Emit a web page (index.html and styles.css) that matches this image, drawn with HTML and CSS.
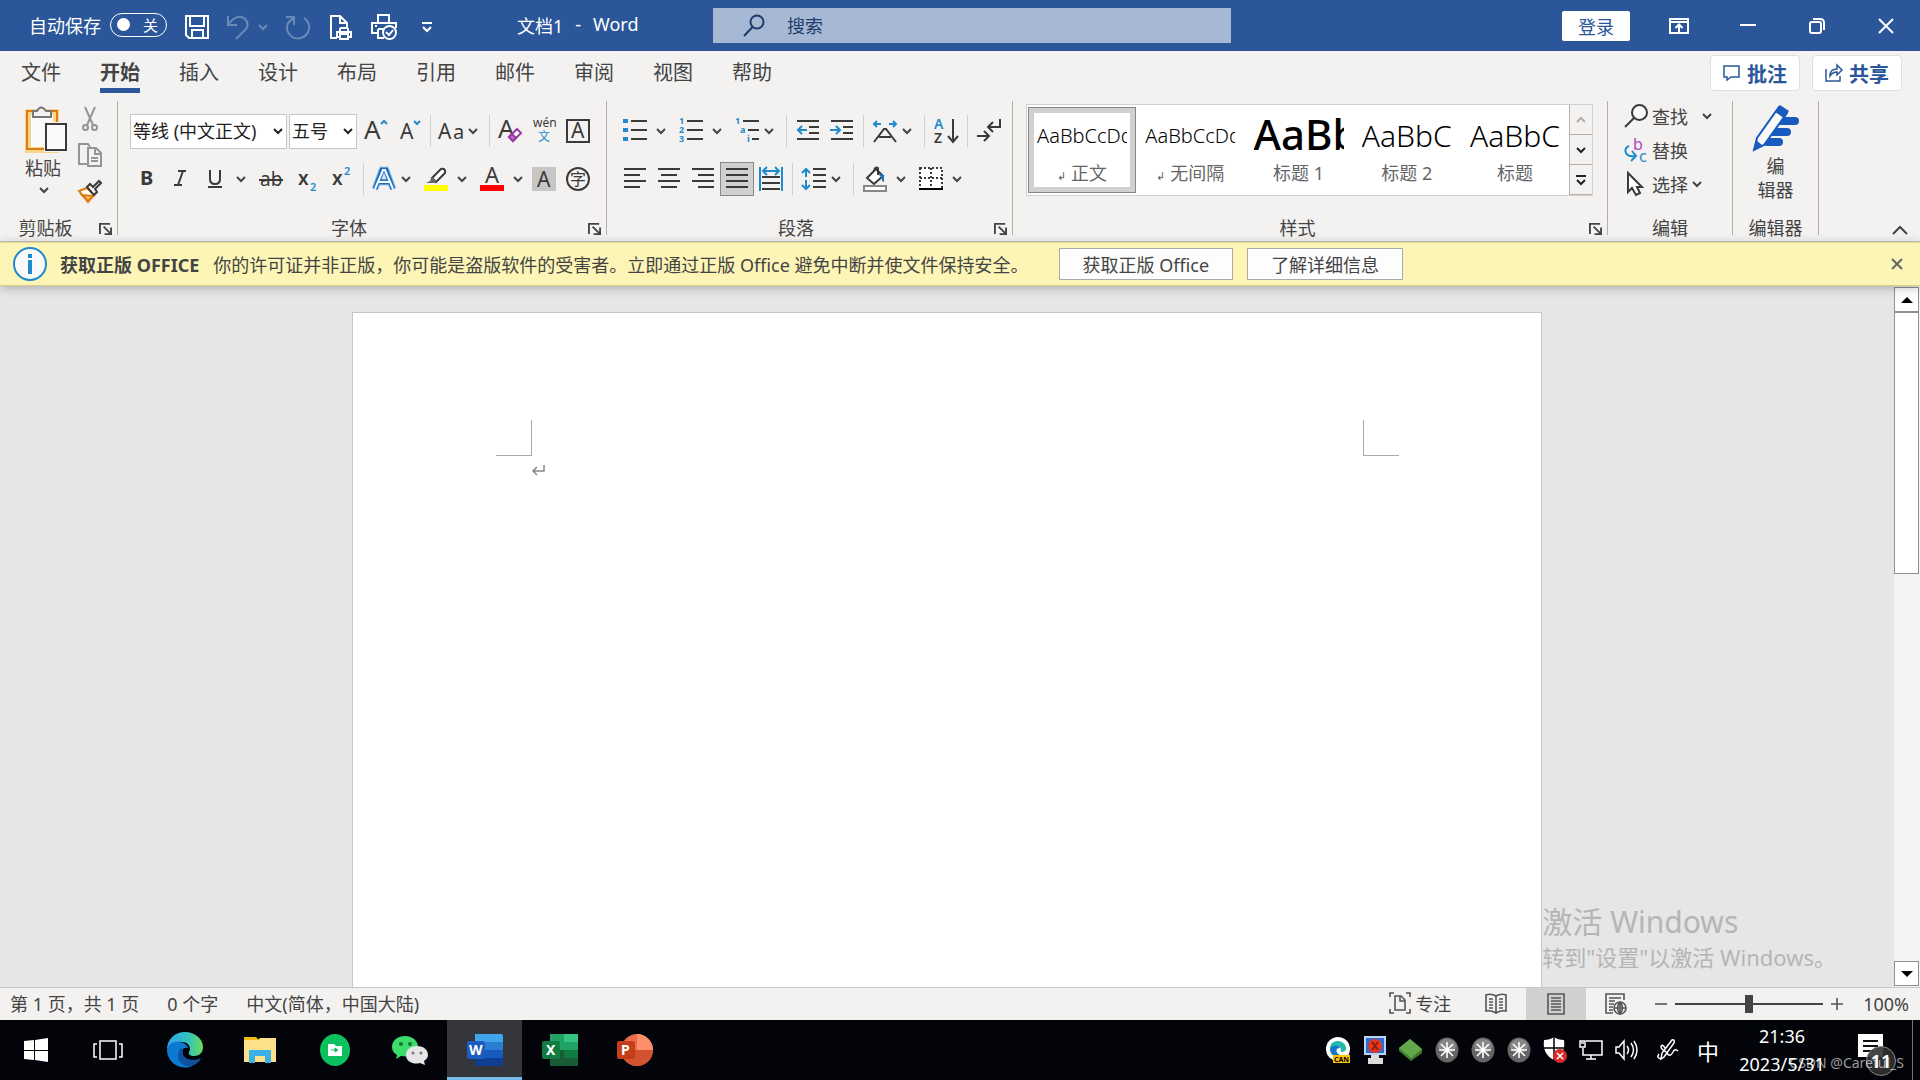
FILE: index.html
```
<!DOCTYPE html>
<html lang="zh-CN">
<head>
    <meta charset="UTF-8">
    <meta name="viewport" content="width=device-width, initial-scale=1.0">
    <title>文档1 - Word</title>
    <link rel="stylesheet" href="styles.css">
</head>
<body>

    <!-- Shared icons -->
    <svg class="sprite" aria-hidden="true">
        <symbol id="chev" viewBox="0 0 10 10"><path d="M1 3l4 4 4-4" fill="none" stroke="currentColor" stroke-width="2"/></symbol>
        <symbol id="launch" viewBox="0 0 14 14"><path d="M1 13V2H12M5 5l7 7M13 6v7H6" fill="none" stroke="currentColor" stroke-width="2"/></symbol>
        <symbol id="star" viewBox="0 0 24 26"><ellipse cx="12" cy="13" rx="11.500" ry="12.500" fill="#666"/><ellipse cx="12" cy="9" rx="9" ry="7" fill="#888"/><path d="M12 5v16M4 13h16M6 7l12 12M18 7L6 19" stroke="#fff" stroke-width="1.600"/></symbol>
    </svg>

    <header class="titlebar">
        <div class="quick">
            <label for="autosave">自动保存</label>
            <span class="toggle"><input type="checkbox" id="autosave"><span>关</span></span>
            <button class="quick-btn" aria-label="保存"><svg width="26" height="26" viewBox="0 0 26 26"><path d="M2 2h22v22H5l-3-3zM6 2v10h14V2M8 24v-8h11v8" /></svg></button>
            <button class="quick-btn undo" aria-label="撤消"><svg width="24" height="26" viewBox="0 0 24 26"><path d="M2 2v9h9M2 11C8 2 15 1 19 5s3 9-1 12l-8 8"/></svg><svg class="chev"><use href="#chev"/></svg></button>
            <button class="quick-btn dim" aria-label="重复"><svg width="26" height="26" viewBox="0 0 26 26"><path d="M1 3h8v8M19 4c7 5 6 13 2 17-5 5-13 4-16 0C0 15 1 8 9 4"/></svg></button>
            <button class="quick-btn" aria-label="打印预览"><svg width="24" height="26" viewBox="0 0 24 26"><path d="M8 24H2V2h9l7 7v5M11 2v7h7M11 14v4m8-4v4M11 14h8M8 23v-5h14v5h-3M8 23h3M11 20h8v5h-8z"/></svg></button>
            <button class="quick-btn" aria-label="快速打印"><svg width="26" height="26" viewBox="0 0 26 26"><path d="M7 9V1h11v8M6 19H1V9h24v5M7 15v9h6M7 15h6M4 12h2"/><circle cx="18.500" cy="18.500" r="6.500"/><path d="M15 18l3 3 4-5"/></svg></button>
            <button class="quick-btn" aria-label="自定义"><svg width="12" height="12" viewBox="0 0 12 12"><path d="M1 2h10M2 6l4 4 4-4"/></svg></button>
            <span class="doc-title"><span>文档1</span><span>-</span><span>Word</span></span>
        </div>
        <div class="search">
            <svg width="22" height="24" viewBox="0 0 22 24"><circle cx="14" cy="8" r="6.500"/><path d="M9.500 13L1 22"/></svg>
            <input type="text" placeholder="搜索" aria-label="搜索">
        </div>
        <div class="window-tools">
            <button class="login">登录</button>
            <button class="win-btn" aria-label="功能区显示选项"><svg width="20" height="16" viewBox="0 0 20 16"><path d="M1 1h18v14H1zM1 4h18M10 14V7M6.500 10L10 6.500l3.500 3.500"/></svg></button>
            <button class="win-btn" aria-label="最小化"><svg width="16" height="16" viewBox="0 0 16 16"><path d="M0 7h16"/></svg></button>
            <button class="win-btn" aria-label="还原"><svg width="16" height="16" viewBox="0 0 16 16"><rect x="1" y="4" width="11" height="11" rx="2"/><path d="M4 1h7q4 0 4 4v7"/></svg></button>
            <button class="win-btn" aria-label="关闭"><svg width="16" height="16" viewBox="0 0 16 16"><path d="M1 1l14 14M15 1L1 15"/></svg></button>
        </div>
    </header>

    <nav class="tabs">
        <a href="#">文件</a>
        <a href="#" class="active">开始</a>
        <a href="#">插入</a>
        <a href="#">设计</a>
        <a href="#">布局</a>
        <a href="#">引用</a>
        <a href="#">邮件</a>
        <a href="#">审阅</a>
        <a href="#">视图</a>
        <a href="#">帮助</a>
        <div class="tab-actions">
            <button><svg width="18" height="18" viewBox="0 0 18 18"><path d="M1 2h15v11H8l-4 3v-3H1z"/></svg>批注</button>
            <button><svg width="18" height="18" viewBox="0 0 18 18"><path d="M1 5v12h14v-5M5 12c0-5 3-7 7-7V1l5 5-5 5V8c-3 0-5 1-7 4z"/></svg>共享</button>
        </div>
    </nav>

    <main class="ribbon">
        <section class="group clipboard">
            <div class="clip-tools">
                <button class="paste">
                    <svg width="44" height="48" viewBox="0 0 44 48"><path d="M4 6h28v38H4z" fill="#fafafa" stroke="#f8d58c" stroke-width="6"/><path d="M3 5h30v38H3z" fill="none" stroke="#e07b12" stroke-width="2"/><path d="M9 11V5h4q4-7 9 0h5v6z" fill="#f3f2f1" stroke="#777" stroke-width="2"/><path d="M20 16h23v30H20z" fill="#f3f2f1"/><path d="M22 18h20v26H22z" fill="#fafafa" stroke="#3b3a39" stroke-width="2"/></svg>
                    <span>粘贴</span>
                    <svg class="chev"><use href="#chev"/></svg>
                </button>
                <div class="clip-side">
                    <button class="tool gray" aria-label="剪切"><svg viewBox="0 0 24 24"><path d="M7 0l8 18M17 0L9 18"/><circle cx="7.500" cy="20.500" r="2.500"/><circle cx="16.500" cy="20.500" r="2.500"/></svg></button>
                    <button class="tool gray" aria-label="复制"><svg viewBox="0 0 24 24"><path d="M9 21H1V1h9l2 3M10 5h8l5 5v13H10zM17 5v6h6M13 15h7M13 18h7"/></svg></button>
                    <button class="tool" aria-label="格式刷"><svg viewBox="0 0 24 24"><path d="M1 12l8-3 7 7-6 7z" fill="#fff" stroke="#e07b12" stroke-width="2"/><path d="M4 16l11 1-5 5z" fill="#f8c877" stroke="#e07b12"/><path d="M9 8l3-3 3 3 6-6 2 2-6 6 2 3-3 3z" fill="#fafafa"/></svg></button>
                </div>
            </div>
            <footer><span>剪贴板</span><button class="launch" aria-label="剪贴板设置"><svg><use href="#launch"/></svg></button></footer>
        </section>

        <section class="group font">
            <div class="row">
                <div class="picker family"><select aria-label="字体"><option>等线 (中文正文)</option></select><svg class="chev"><use href="#chev"/></svg></div>
                <div class="picker size"><select aria-label="字号"><option>五号</option></select><svg class="chev"><use href="#chev"/></svg></div>
                <button class="tool" aria-label="增大字号"><svg viewBox="0 0 24 24"><text x="0" y="20" font-size="26">A</text><path class="blue" d="M17 5l3-3 3 3"/></svg></button>
                <button class="tool" aria-label="减小字号"><svg viewBox="0 0 24 24"><text x="2" y="20" font-size="21">A</text><path class="blue" d="M16 2l3 3 3-3"/></svg></button>
                <i class="sep"></i>
                <button class="tool drop tight" aria-label="更改大小写"><svg viewBox="0 0 24 24"><text x="-1" y="20" font-size="21">A</text><text x="14" y="20" font-size="20">a</text></svg><svg class="chev"><use href="#chev"/></svg></button>
                <i class="sep"></i>
                <button class="tool" aria-label="清除格式"><svg viewBox="0 0 24 24"><text x="0" y="19" font-size="26">A</text><path d="M11 18l8-8 4 4-8 8z" fill="#fff" stroke="#9b38a8" stroke-width="2"/><path d="M11 18l3-3 4 4-3 3z" fill="#b978c4" stroke="#9b38a8"/></svg></button>
                <button class="tool" aria-label="拼音指南"><svg viewBox="0 0 24 24"><text x="1" y="8" font-size="12">wén</text><text class="blue-text" x="6" y="22" font-size="12">文</text></svg></button>
                <button class="tool" aria-label="字符边框"><svg viewBox="0 0 24 24"><path d="M1 1h22v22H1z" stroke-width="2"/><text x="5" y="19" font-size="21">A</text></svg></button>
            </div>
            <div class="row">
                <button class="tool" aria-label="加粗"><svg viewBox="0 0 24 24"><text x="5" y="18" font-size="20" font-weight="700">B</text></svg></button>
                <button class="tool" aria-label="倾斜"><svg viewBox="0 0 24 24"><path d="M9 4h8M14 4l-5 14M5 18h8"/></svg></button>
                <button class="tool drop" aria-label="下划线"><svg viewBox="0 0 24 24"><path d="M7 3v9q0 5 5 5t5-5V3M5 20h14"/></svg><svg class="chev"><use href="#chev"/></svg></button>
                <button class="tool spaced" aria-label="删除线"><svg viewBox="0 0 24 24"><text x="1" y="19" font-size="19">ab</text><path d="M0 13h24"/></svg></button>
                <button class="tool spaced" aria-label="下标"><svg viewBox="0 0 24 24"><text x="1" y="18" font-size="19" font-weight="600">x</text><text class="blue-text" x="13" y="24" font-size="11" font-weight="600">2</text></svg></button>
                <button class="tool" aria-label="上标"><svg viewBox="0 0 24 24"><text x="1" y="18" font-size="19" font-weight="600">x</text><text class="blue-text" x="13" y="8" font-size="11" font-weight="600">2</text></svg></button>
                <i class="sep"></i>
                <button class="tool drop tight" aria-label="文本效果"><svg viewBox="0 0 24 24"><path d="M3 22L10 3h4l7 19M7 15h10" fill="none" stroke="#9fd0f2" stroke-width="7"/><path d="M3 22L10 3h4l7 19M7 15h10" fill="none" stroke="#1a6fc0" stroke-width="5"/><path d="M3 22L11 3h2l8 19M7 15h10" fill="none" stroke="#fff" stroke-width="2"/></svg><svg class="chev"><use href="#chev"/></svg></button>
                <button class="tool drop" aria-label="突出显示"><svg viewBox="0 0 24 24"><path d="M8 11l9-9q5-1 4 4l-9 9z" fill="#fff"/><path d="M8 10l5 5-3 1H2l4-2z" fill="#666" stroke="none"/><path d="M0 18h24v6H0z" fill="#ff0" stroke="none"/></svg><svg class="chev"><use href="#chev"/></svg></button>
                <button class="tool drop spaced" aria-label="字体颜色"><svg viewBox="0 0 24 24"><text x="5" y="16" font-size="22">A</text><path d="M0 18h24v6H0z" fill="#f00" stroke="none"/></svg><svg class="chev"><use href="#chev"/></svg></button>
                <button class="tool" aria-label="字符底纹"><svg viewBox="0 0 24 24"><path d="M0 0h24v24H0z" fill="#c8c6c4" stroke="none"/><text x="5" y="20" font-size="21">A</text></svg></button>
                <button class="tool" aria-label="带圈字符"><svg viewBox="0 0 24 24"><circle cx="12" cy="12" r="11"/><text x="4" y="18" font-size="16">字</text></svg></button>
            </div>
            <footer><span>字体</span><button class="launch" aria-label="字体设置"><svg><use href="#launch"/></svg></button></footer>
        </section>

        <section class="group paragraph">
            <div class="row">
                <button class="tool drop" aria-label="项目符号"><svg viewBox="0 0 24 24"><path d="M8 2h16M8 11h16M8 20h16"/><path class="fill-blue" d="M0 0h5v4H0zM0 9h5v4H0zM0 18h5v4H0z"/></svg><svg class="chev"><use href="#chev"/></svg></button>
                <button class="tool drop spaced" aria-label="编号"><svg viewBox="0 0 24 24"><path d="M8 2h16M8 11h16M8 20h16"/><g class="blue-text" font-size="9" font-weight="700"><text x="0" y="5">1</text><text x="0" y="14">2</text><text x="0" y="23">3</text></g></svg><svg class="chev"><use href="#chev"/></svg></button>
                <button class="tool drop tight spaced" aria-label="多级列表"><svg viewBox="0 0 24 24"><path d="M8 2h16M13 11h11M17 20h7"/><g class="blue-text" font-size="9" font-weight="700"><text x="0" y="5">1</text><text x="5" y="14">a</text><text x="12" y="23">i</text></g></svg><svg class="chev"><use href="#chev"/></svg></button>
                <i class="sep"></i>
                <button class="tool" aria-label="减少缩进"><svg viewBox="0 0 24 24"><path d="M1 2h22M13 8h10M13 14h10M1 20h22"/><path class="blue" d="M11 11H2M6 7l-4 4 4 4"/></svg></button>
                <button class="tool" aria-label="增加缩进"><svg viewBox="0 0 24 24"><path d="M1 2h22M13 8h10M13 14h10M1 20h22"/><path class="blue" d="M0 11h10M6 7l4 4-4 4"/></svg></button>
                <i class="sep"></i>
                <button class="tool drop tight" aria-label="中文版式"><svg viewBox="0 0 24 24"><path d="M1 23L11 10h2l10 13M6 18h12" stroke-width="2"/><path class="blue" d="M8 5H1M4 2L1 5l3 3M16 5h7M20 2l3 3-3 3"/></svg><svg class="chev"><use href="#chev"/></svg></button>
                <i class="sep"></i>
                <button class="tool" aria-label="排序"><svg viewBox="0 0 24 24"><text class="blue-text" x="0" y="10" font-size="14" font-weight="600">A</text><text x="0" y="24" font-size="14" font-weight="600">Z</text><path d="M19 0v22M14 17l5 6 5-6"/></svg></button>
                <i class="sep"></i>
                <button class="tool" aria-label="显示编辑标记"><svg viewBox="0 0 24 24"><path d="M23 0v8H11M16 3l-5 5 5 5M0 17h12M7 12l5 5-5 5"/></svg></button>
            </div>
            <div class="row">
                <button class="tool" aria-label="左对齐"><svg viewBox="0 0 24 24"><path d="M1 2h22M1 8h16M1 14h22M1 20h16"/></svg></button>
                <button class="tool" aria-label="居中"><svg viewBox="0 0 24 24"><path d="M1 2h22M4 8h16M1 14h22M4 20h16"/></svg></button>
                <button class="tool" aria-label="右对齐"><svg viewBox="0 0 24 24"><path d="M1 2h22M7 8h16M1 14h22M7 20h16"/></svg></button>
                <button class="tool pressed" aria-label="两端对齐"><svg viewBox="0 0 24 24"><path d="M1 2h22M1 8h22M1 14h22M1 20h22"/></svg></button>
                <button class="tool" aria-label="分散对齐"><svg viewBox="0 0 24 24"><path d="M3 10h18M3 16h18M3 22h18"/><path class="blue" d="M1 0v24M23 0v24M4 4h16M8 0L4 4l4 4M16 0l4 4-4 4"/></svg></button>
                <i class="sep"></i>
                <button class="tool drop tight" aria-label="行距"><svg viewBox="0 0 24 24"><path d="M11 2h13M11 8h13M11 14h13M11 20h13"/><path class="blue" d="M4 2v8M0 6l4-4 4 4M4 13v8M0 18l4 4 4-4"/></svg><svg class="chev"><use href="#chev"/></svg></button>
                <i class="sep"></i>
                <button class="tool drop" aria-label="底纹"><svg viewBox="0 0 24 24"><path d="M4 11l9-9 7 7-9 8zM11 4q1-5 4-3v7" fill="#fff"/><path d="M17 6q5 1 4 9l-2-1q0-4-3-6z" fill="#1a6fc0" stroke="none"/><path d="M1 19h22v5H1z" fill="#fff" stroke="#888"/></svg><svg class="chev"><use href="#chev"/></svg></button>
                <button class="tool drop spaced" aria-label="边框"><svg viewBox="0 0 24 24"><path d="M1 1h22v21H1zM1 11h22M12 1v21" fill="#fff" stroke-dasharray="2 2"/><path d="M0 22h24" stroke="#000" stroke-width="2"/></svg><svg class="chev"><use href="#chev"/></svg></button>
            </div>
            <footer><span>段落</span><button class="launch" aria-label="段落设置"><svg><use href="#launch"/></svg></button></footer>
        </section>

        <section class="group styles">
            <div class="gallery">
                <button class="style selected"><span class="sample">AaBbCcDd</span><span class="style-name"><small>↲</small> 正文</span></button>
                <button class="style"><span class="sample">AaBbCcDd</span><span class="style-name"><small>↲</small> 无间隔</span></button>
                <button class="style"><span class="sample h1">AaBb</span><span class="style-name">标题 1</span></button>
                <button class="style"><span class="sample h2">AaBbC</span><span class="style-name">标题 2</span></button>
                <button class="style"><span class="sample h2">AaBbC</span><span class="style-name">标题</span></button>
                <div class="gallery-nav">
                    <button class="off" aria-label="上一行"><svg class="chev up"><use href="#chev"/></svg></button>
                    <button aria-label="下一行"><svg class="chev"><use href="#chev"/></svg></button>
                    <button aria-label="其他"><svg width="12" height="12" viewBox="0 0 12 12"><path d="M1 2h10M2 6l4 4 4-4" fill="none" stroke="#222" stroke-width="2"/></svg></button>
                </div>
            </div>
            <footer><span>样式</span><button class="launch" aria-label="样式设置"><svg><use href="#launch"/></svg></button></footer>
        </section>

        <section class="group editing">
            <div class="edit-list">
                <button><svg class="ico" viewBox="0 0 24 24"><circle cx="15.500" cy="8.500" r="7.500" fill="#fafafa"/><path d="M10 14L1 23" stroke-width="2"/></svg>查找<svg class="chev far"><use href="#chev"/></svg></button>
                <button><svg class="ico" viewBox="0 0 24 24"><text class="purple-text" x="9" y="12" font-size="16">b</text><text class="blue-text" x="15" y="24" font-size="16">c</text><path class="blue" d="M5 8q-5 2-3 7 2 4 9 3M8 13l4 5-5 5"/></svg>替换</button>
                <button><svg class="ico" viewBox="0 0 24 24"><path d="M4 1v19l4-4 4 7 4-2-3-6h5z" fill="#fff"/></svg>选择<svg class="chev"><use href="#chev"/></svg></button>
            </div>
            <footer><span>编辑</span></footer>
        </section>

        <section class="group editor">
            <button class="editor-btn">
                <svg width="46" height="46" viewBox="0 0 46 46"><path d="M24 16h18M20 27h14M14 37h12" stroke="#185abd" stroke-width="8" stroke-linecap="round"/><path d="M1 45l3-12L26 2l8 6-23 32z" fill="#fafafa" stroke="#185abd" stroke-width="2"/><path d="M22 7l5-7 9 6-5 7zM0 46l3-11 6 5z" fill="#185abd"/></svg>
                <span>编<br>辑器</span>
            </button>
            <footer><span>编辑器</span></footer>
        </section>
        <button class="collapse" aria-label="折叠功能区"><svg width="16" height="10" viewBox="0 0 16 10"><path d="M1 9l7-7 7 7" fill="none" stroke="currentColor" stroke-width="2"/></svg></button>
    </main>

    <div class="message">
        <svg width="34" height="34" viewBox="0 0 34 34"><circle cx="17" cy="17" r="16" fill="#fafafa" stroke="#1e8bcd" stroke-width="2"/><path d="M17 7v4M17 13v14" stroke="#1e8bcd" stroke-width="4"/></svg>
        <strong>获取正版 OFFICE</strong>
        <p>你的许可证并非正版，你可能是盗版软件的受害者。立即通过正版 Office 避免中断并使文件保持安全。</p>
        <button class="msg-btn">获取正版 Office</button>
        <button class="msg-btn">了解详细信息</button>
        <button class="msg-close" aria-label="关闭"><svg width="12" height="12" viewBox="0 0 12 12"><path d="M1 1l10 10M11 1L1 11" stroke="#666" stroke-width="2"/></svg></button>
    </div>

    <div class="workspace">
        <div class="canvas">
            <article class="page">
                <div class="corners"><i class="corner left"></i><i class="corner right"></i></div>
                <div class="para"><svg width="13" height="12" viewBox="0 0 13 12"><path d="M12 0v6H1M5 2L1 6l4 4" fill="none" stroke="#888" stroke-width="1.500"/></svg></div>
            </article>
        </div>
        <div class="scrollbar">
            <button aria-label="向上滚动"><svg width="12" height="6" viewBox="0 0 12 6"><path d="M0 6l6-6 6 6z"/></svg></button>
            <div class="thumb"></div>
            <button class="down" aria-label="向下滚动"><svg width="12" height="6" viewBox="0 0 12 6"><path d="M0 0l6 6 6-6z"/></svg></button>
        </div>
        <div class="activate">
            <p class="big">激活 Windows</p>
            <p>转到"设置"以激活 Windows。</p>
        </div>
    </div>

    <div class="status">
        <span>第 1 页，共 1 页</span>
        <span>0 个字</span>
        <span>中文(简体，中国大陆)</span>
        <div class="views">
            <button class="focus"><svg width="22" height="22" viewBox="0 0 22 22"><path d="M5 1H1v4M17 1h4v4M1 17v4h4M21 17v4h-4M6 4h6l4 4v10H6zM11 4v5h5"/></svg>专注</button>
            <button aria-label="阅读视图"><svg width="22" height="22" viewBox="0 0 22 22"><path d="M11 3Q6 0 1 2v16q5-1 10 2 5-3 10-2V2q-5-2-10 1v17M4 6h4M4 9h4M4 12h4M4 15h4M14 6h4M14 9h4M14 12h4M14 15h4"/></svg></button>
            <button class="on" aria-label="页面视图"><svg width="18" height="22" viewBox="0 0 18 22"><path d="M1 1h16v20H1zM4 5h10M4 8h10M4 11h10M4 14h10M4 17h10"/></svg></button>
            <button aria-label="Web 版式"><svg width="22" height="22" viewBox="0 0 22 22"><path d="M8 20H1V1h18v6M4 5h12M4 8h6M4 11h5M4 14h4M4 17h4"/><circle cx="15" cy="15" r="6"/><path d="M9 15h12M15 9v12M15 9q-5 6 0 12 5-6 0-12"/></svg></button>
        </div>
        <div class="zoom">
            <button aria-label="缩小"><svg width="12" height="12" viewBox="0 0 12 12"><path d="M0 6h12"/></svg></button>
            <input type="range" min="0" max="100" value="50" aria-label="显示比例">
            <button aria-label="放大"><svg width="12" height="12" viewBox="0 0 12 12"><path d="M0 6h12M6 0v12"/></svg></button>
            <span>100%</span>
        </div>
    </div>

    <div class="taskbar">
        <button class="start" aria-label="开始"><svg width="24" height="24" viewBox="0 0 24 24"><path d="M0 3l10-1v10H0zM11 2l13-2v12H11zM0 13h10v9L0 21zM11 13h13v11l-13-2z" fill="#fff"/></svg></button>
        <button class="task-view" aria-label="任务视图"><svg width="30" height="20" viewBox="0 0 30 20"><path d="M7 1h16v18H7zM4 4H1v13h3M26 4h3v13h-3" fill="none" stroke="#fff" stroke-width="1.500"/></svg></button>
        <button aria-label="Edge"><svg width="36" height="36" viewBox="0 0 36 36"><defs><linearGradient id="eg"><stop offset="0" stop-color="#2fa8e8"/><stop offset=".6" stop-color="#35c2bd"/><stop offset="1" stop-color="#6bdc55"/></linearGradient></defs><path d="M0 18C0 7 8 0 18 0s18 7 18 15c0 6-4 9-9 9-4 0-6-2-5-4 3-5-1-10-7-10C8 9 2 12 0 18z" fill="url(#eg)"/><path d="M0 18C1 11 7 9 13 10c5 1 8 4 8 6-10-2-10 15 4 18-11 5-25-3-25-16z" fill="#0b7ad1"/><path d="M14 16c-7 9 0 20 11 18 5-2 8-5 9-8-7 4-20 2-18-8z" fill="#11519b"/></svg></button>
        <button aria-label="文件资源管理器"><svg width="32" height="28" viewBox="0 0 32 28"><path d="M0 1h12l3 3H0z" fill="#f5b915"/><path d="M0 4h14l2-2h16v24H0z" fill="#ffe08a"/><path d="M5 27V14h22v13h-6v-7H11v7z" fill="#3bb0e6"/></svg></button>
        <button aria-label="文件传输"><svg width="30" height="32" viewBox="0 0 30 32"><ellipse cx="15" cy="16" rx="15" ry="16" fill="#0bc15f"/><path d="M8 10h6l2 2h6v10H8z" fill="#fff"/><path d="M11 16h6M15 14l3 2-3 2z" stroke="#0bc15f" fill="#0bc15f"/></svg></button>
        <button aria-label="微信"><svg width="36" height="32" viewBox="0 0 36 32"><path d="M13 2C5 2 0 7 0 13c0 4 2 6 5 8l-1 4 5-3c12 2 17-3 17-9S21 2 13 2z" fill="#3bdc6a"/><path d="M25 12c-7 0-11 4-11 9 0 7 8 10 14 8l5 2-1-4c3-2 4-4 4-6 0-5-4-9-11-9z" fill="#e6e6e6"/><g fill="#19753a"><circle cx="9" cy="10" r="2"/><circle cx="18" cy="10" r="2"/></g><g fill="#777"><circle cx="21" cy="19" r="1.500"/><circle cx="29" cy="19" r="1.500"/></g></svg></button>
        <button class="running" aria-label="Word"><svg width="36" height="32" viewBox="0 0 36 32"><path d="M8 0h26q2 0 2 2v6H8z" fill="#41a5ee"/><path d="M8 8h28v8H8z" fill="#2b7cd3"/><path d="M8 16h28v8H8z" fill="#185abd"/><path d="M8 24h28v6q0 2-2 2H8z" fill="#103f91"/><rect y="7" width="18" height="18" rx="2" fill="#1b5cbe"/><text x="2" y="21" font-size="14" font-weight="700" fill="#fff">W</text></svg></button>
        <button aria-label="Excel"><svg width="36" height="32" viewBox="0 0 36 32"><path d="M8 0h28v32H8z" fill="#21a366"/><path d="M22 0h14v8H22z" fill="#33c481"/><path d="M8 16h28v16H8z" fill="#185c37"/><path d="M22 16h14v8H22z" fill="#107c41"/><rect y="7" width="18" height="18" rx="2" fill="#107c41"/><text x="4" y="21" font-size="14" font-weight="700" fill="#fff">X</text></svg></button>
        <button aria-label="PowerPoint"><svg width="36" height="32" viewBox="0 0 36 32"><circle cx="20" cy="16" r="16" fill="#ed6c47"/><path d="M20 0a16 16 0 0 1 16 16H20z" fill="#ff8f6b"/><path d="M4 16h32a16 16 0 0 1-32 0z" fill="#d35230"/><rect y="7" width="18" height="18" rx="2" fill="#c43e1c"/><text x="4" y="21" font-size="14" font-weight="700" fill="#fff">P</text></svg></button>

        <div class="tray">
            <button aria-label="Edge Canary"><svg width="26" height="26" viewBox="0 0 26 26"><circle cx="12" cy="12" r="12" fill="#fff"/><path d="M4 12c0-6 4-8 8-8s8 3 8 7c0 3-2 4-5 4 0-4-1-6-4-6-4 0-6 2-7 3z" fill="#25b9ad"/><path d="M4 12c1-4 9-5 10-1-6 0-4 7 3 8-7 3-13-1-13-7z" fill="#1477c9"/><path d="M7 18h17v8H7z" fill="#ffc400"/><text x="8" y="25" font-size="7" font-weight="700">CAN</text></svg></button>
            <button aria-label="网络警告"><svg width="22" height="28" viewBox="0 0 22 28"><path d="M0 0h22v19H0z" fill="#b9d4f5"/><path d="M2 2h18v15H2z" fill="#2d6bd5"/><circle cx="11" cy="10" r="7" fill="#e4391f"/><path d="M8 6l6 8M14 6l-6 8" stroke="#8e1a0b" stroke-width="2"/><path d="M7 19h8v3h4v6H4v-6h3z" fill="#ddd"/></svg></button>
            <button aria-label="安全删除硬件"><svg width="24" height="24" viewBox="0 0 24 24"><path d="M11 1l12 10v4L12 23 0 13v-3z" fill="#3d7d2c"/><path d="M11 1l12 10-11 9L0 10z" fill="#62a84b"/></svg></button>
            <button aria-label="服务 1"><svg width="24" height="26"><use href="#star"/></svg></button>
            <button aria-label="服务 2"><svg width="24" height="26"><use href="#star"/></svg></button>
            <button aria-label="服务 3"><svg width="24" height="26"><use href="#star"/></svg></button>
            <button aria-label="安全中心"><svg width="24" height="28" viewBox="0 0 24 28"><path d="M11 1q4 3 10 3 2 14-10 20Q-1 18 1 4q6 0 10-3z" fill="#fff"/><path d="M11 1v23M0 12h22" stroke="#000" stroke-width="1.500"/><circle cx="17" cy="20" r="7" fill="#d92b2b"/><path d="M14 17l6 6M20 17l-6 6" stroke="#fff" stroke-width="1.500"/></svg></button>
            <button aria-label="网络"><svg class="line" width="24" height="24" viewBox="0 0 24 24"><path d="M7 3h16v14H4v-7M12 17v4M7 21h10M1 3h5v6H1zM2 5h3"/></svg></button>
            <button aria-label="音量"><svg class="line" width="24" height="24" viewBox="0 0 24 24"><path d="M1 9h3l5-6v18l-5-6H1zM12 8q3 4 0 8M16 5q5 7 0 14M19 3q6 9 0 18"/></svg></button>
            <button class="pen" aria-label="手写"><svg class="line" width="22" height="24" viewBox="0 0 22 24"><path d="M7 19L17 5q1-4-2-3L5 15l-1 6zM8 10q-3-5-4-1c0 3 5 4 6 6q3 5 6-1 2-4 5-1M4 21q-5-1-2-5"/></svg></button>
            <span class="ime">中</span>
            <div class="clock">21:36<br>2023/5/31</div>
            <button class="notice" aria-label="通知"><svg width="26" height="28" viewBox="0 0 26 28"><path d="M0 0h25v23h-6l-6 5v-5H0z" fill="#fff"/><path d="M5 7h15M5 12h15M5 17h10" stroke="#111" stroke-width="2"/></svg><span class="badge">11</span></button>
            <i class="desktop-edge"></i>
        </div>
        <span class="credit">CSDN @Careful_S</span>
    </div>

</body>
</html>
```
FILE: styles.css
```
* {
    box-sizing: border-box;
}

body {
    display: flex;
    flex-direction: column;
    height: 100vh;
    margin: 0;
    overflow: hidden;
    background: #f3f2f1;
    color: #444;
    font-family: "Noto Sans", "Noto Sans CJK SC", sans-serif;
    font-size: 18px;
}

button {
    display: flex;
    align-items: center;
    justify-content: center;
    padding: 0;
    border: 0;
    background: none;
    color: inherit;
    font: inherit;
}

p {
    margin: 0;
}

svg {
    flex: none;
    overflow: visible;
}

.sprite {
    position: absolute;
    width: 0;
    height: 0;
}

.chev {
    width: 10px;
    height: 10px;
}

.up {
    transform: rotate(180deg);
}

/* Title bar */
.titlebar {
    display: grid;
    grid-template-columns: 713fr 518fr 689fr;
    align-items: center;
    height: 51px;
    background: #2b579a;
    color: #fff;
}

.titlebar svg {
    fill: none;
    stroke: #fff;
    stroke-width: 2;
}

.quick {
    display: flex;
    align-items: center;
    height: 51px;
    padding: 0 0 2px 29px;
    white-space: nowrap;
}

.toggle {
    display: flex;
    align-items: center;
    justify-content: space-between;
    width: 57px;
    height: 24px;
    margin: 0 8px 0 9px;
    padding: 0 8px 0 6px;
    border: 1px solid #fff;
    border-radius: 12px;
    font-size: 15px;
}

.toggle input {
    width: 13px;
    height: 13px;
    margin: 0;
    border-radius: 50%;
    background: #fff;
    appearance: none;
}

.quick-btn {
    width: 43px;
    height: 36px;
    padding-top: 4px;
}

.undo {
    width: 58px;
    gap: 8px;
    opacity: 0.3;
}

.dim {
    opacity: 0.3;
}

.doc-title {
    display: flex;
    gap: 12px;
    margin-left: 69px;
}

.search {
    display: flex;
    align-items: center;
    gap: 22px;
    height: 35px;
    padding-left: 30px;
    background: #a6b8d4;
}

.search svg {
    stroke: #1e3c6b;
}

.search input {
    flex: 1;
    min-width: 0;
    padding: 0;
    border: 0;
    background: none;
    font: inherit;
}

.search input::placeholder {
    color: #1e3c6b;
    opacity: 1;
}

.window-tools {
    display: flex;
    align-items: center;
    justify-content: flex-end;
}

.login {
    width: 68px;
    height: 30px;
    margin-right: 14px;
    border-radius: 2px;
    background: #fff;
    color: #2b579a;
}

.win-btn {
    width: 69px;
    height: 50px;
}

/* Tabs */
.tabs {
    display: flex;
    align-items: flex-start;
    gap: 39px;
    height: 46px;
    padding: 4px 18px 0 21px;
    font-size: 20px;
}

.tabs a {
    padding-top: 3px;
    border-bottom: 5px solid transparent;
    color: #444;
    line-height: 30px;
    text-decoration: none;
}

.tabs .active {
    border-color: #2b579a;
    font-weight: 700;
}

.tab-actions {
    display: flex;
    gap: 12px;
    margin-left: auto;
}

.tab-actions button {
    gap: 6px;
    width: 90px;
    height: 36px;
    border: 1px solid #e1dfdd;
    border-radius: 4px;
    background: #fff;
    color: #2b579a;
    font-weight: 700;
}

.tab-actions svg {
    fill: none;
    stroke: #2b579a;
    stroke-width: 1.5;
}

/* Ribbon */
.ribbon {
    display: flex;
    height: 145px;
    padding: 4px 0 6px;
    border-bottom: 1px solid #c8c6c4;
}

.group {
    display: flex;
    flex-direction: column;
    padding-top: 6px;
    border-right: 1px solid #b3b0ad;
}

.group footer {
    display: flex;
    align-items: center;
    height: 14px;
    margin-top: auto;
    padding-right: 5px;
    line-height: 14px;
}

.group footer span {
    flex: 1;
    margin-right: 20px;
    text-align: center;
    white-space: nowrap;
}

.launch svg {
    width: 13px;
    height: 13px;
}

.row {
    display: flex;
    align-items: center;
    height: 48px;
}

.tool {
    width: 34px;
    height: 34px;
}

.tool svg:first-child,
.ico {
    width: 24px;
    height: 24px;
    fill: none;
    stroke: #3b3a39;
    stroke-width: 2;
}

.tool .chev,
.edit-list .chev {
    width: 10px;
    height: 10px;
}

.tool text,
.ico text {
    fill: #3b3a39;
    stroke: none;
}

.tool .blue,
.ico .blue {
    stroke: #1e8bcd;
    stroke-width: 2;
}

.tool .blue-text,
.tool .blue-text text,
.ico .blue-text {
    fill: #1e8bcd;
}

.ico .purple-text {
    fill: #b146c2;
}

.tool .fill-blue {
    fill: #1e8bcd;
    stroke: none;
}

.gray svg:first-child {
    stroke: #979593;
}

.drop {
    justify-content: flex-start;
    gap: 9px;
    width: 52px;
    padding-left: 5px;
}

.tight {
    gap: 5px;
}

.spaced {
    margin-left: 4px;
}

.pressed {
    border: 1px solid #8a8886;
    background: #d2d0ce;
}

.sep {
    width: 1px;
    height: 32px;
    margin: 0 3px;
    background: #d2d0ce;
}

.clipboard {
    width: 118px;
    padding-top: 1px;
}

.clipboard footer span {
    margin-right: 8px;
}

.clip-tools {
    display: flex;
    padding-left: 24px;
}

.paste {
    flex-direction: column;
    justify-content: flex-start;
    width: 44px;
    padding-top: 4px;
}

.paste span {
    margin-right: 6px;
    line-height: 28px;
}

.paste .chev {
    margin: 3px 4px 0 0;
}

.clip-side {
    display: flex;
    flex-direction: column;
    gap: 2px;
    padding-left: 5px;
}

.font {
    width: 489px;
    padding-left: 12px;
}

.picker {
    display: flex;
    align-items: center;
    height: 35px;
    margin-right: 2px;
    padding: 0 3px 0 2px;
    border: 1px solid #c8c6c4;
    background: #fff;
    color: #222;
}

.picker select {
    flex: 1;
    min-width: 0;
    padding: 0;
    border: 0;
    background: none;
    color: inherit;
    font: inherit;
    appearance: none;
}

.family {
    width: 157px;
}

.size {
    width: 68px;
}

.paragraph {
    width: 406px;
    padding-left: 11px;
}

.paragraph .sep {
    margin: 0 4px;
}

/* Style gallery */
.styles {
    width: 595px;
    padding: 3px 0 0 13px;
}

.gallery {
    display: flex;
    width: 567px;
    height: 92px;
    padding-left: 1px;
    border: 1px solid #d2d0ce;
    background: #fff;
}

.style {
    flex: 1;
    flex-direction: column;
    justify-content: flex-start;
    min-width: 0;
    height: 86px;
    margin-top: 2px;
    padding: 1px 4px;
    border: 1px solid transparent;
    color: #666;
}

.selected {
    border-color: #8a8886;
    box-shadow: inset 0 0 0 5px #d2d0ce;
}

.sample {
    width: 90px;
    height: 52px;
    overflow: hidden;
    color: #000;
    font-size: 20px;
    font-weight: 300;
    line-height: 54px;
    text-align: left;
    white-space: nowrap;
}

.h1 {
    font-size: 42px;
    font-weight: 500;
    line-height: 50px;
}

.h2 {
    font-size: 30px;
}

.style-name {
    line-height: 24px;
    white-space: nowrap;
}

.style-name small {
    font-size: 11px;
}

.gallery-nav {
    display: flex;
    flex-direction: column;
    width: 23px;
}

.gallery-nav button {
    flex: 1;
    border-bottom: 1px solid #b3b0ad;
    border-left: 1px solid #b3b0ad;
    background: #f3f2f1;
    color: #222;
}

.gallery-nav .off {
    color: #b3b0ad;
}

.editing {
    width: 125px;
    padding-top: 0;
}

.editing footer,
.editor footer {
    padding: 0;
}

.editing footer span,
.editor footer span {
    margin: 0;
}

.edit-list {
    display: flex;
    flex-direction: column;
    padding-left: 16px;
}

.edit-list button {
    justify-content: flex-start;
    gap: 4px;
    height: 34px;
    padding-bottom: 4px;
}

.edit-list .far {
    margin-left: 10px;
}

.editor {
    width: 86px;
    padding-top: 4px;
}

.editor-btn {
    flex-direction: column;
    gap: 3px;
    line-height: 24px;
}

.collapse {
    align-self: flex-end;
    margin: 0 12px 0 auto;
}

/* Licence message */
.message {
    display: flex;
    z-index: 1;
    align-items: center;
    height: 44px;
    padding: 0 17px 0 13px;
    border-top: 1px solid #e0d98c;
    border-bottom: 1px solid #d6cf85;
    background: #fcf5b6;
    box-shadow: 0 2px 10px rgba(0, 0, 0, 0.25);
    white-space: nowrap;
}

.message strong {
    margin: 0 14px 0 13px;
}

.message p {
    margin-right: 30px;
}

.msg-btn {
    height: 32px;
    margin-right: 14px;
    padding: 0 23px;
    border: 1px solid #ababab;
    background: #fdfdfd;
}

.msg-close {
    margin-left: auto;
}

/* Document */
.workspace {
    display: flex;
    position: relative;
    flex: 1;
    min-height: 0;
    background: #e6e6e6;
}

.canvas {
    display: flex;
    flex: 1;
    justify-content: center;
    padding-top: 26px;
}

.page {
    width: 1190px;
    padding: 107px 142px 0 143px;
    border: 1px solid #c6c6c6;
    border-bottom: 0;
    background: #fff;
}

.corners {
    display: flex;
    justify-content: space-between;
}

.corner {
    width: 36px;
    height: 36px;
    border-bottom: 1px solid #aaa;
}

.left {
    border-right: 1px solid #aaa;
}

.right {
    border-left: 1px solid #aaa;
}

.para {
    padding: 7px 36px;
    line-height: 14px;
}

.scrollbar {
    display: flex;
    flex-direction: column;
    width: 26px;
    padding: 1px 1px 1px 0;
    background: #f3f3f3;
}

.scrollbar button,
.thumb {
    flex: none;
    height: 25px;
    border: 1px solid #8f8f8f;
    background: #fff;
}

.scrollbar .thumb {
    height: 262px;
}

.scrollbar .down {
    margin-top: auto;
}

.activate {
    position: absolute;
    right: 84px;
    bottom: 15px;
    color: #b5b5b5;
    font-size: 22px;
    line-height: 30px;
}

.activate .big {
    font-size: 30px;
    line-height: 40px;
}

/* Status bar */
.status {
    display: flex;
    gap: 28px;
    align-items: center;
    height: 33px;
    padding: 0 11px 0 10px;
    border-top: 1px solid #c6c6c6;
    white-space: nowrap;
}

.status > span,
.focus {
    padding-bottom: 2px;
}

.status svg {
    fill: none;
    stroke: #555;
    stroke-width: 1.6;
}

.views {
    display: flex;
    align-self: stretch;
    margin-left: auto;
}

.views button {
    width: 60px;
}

.views .focus {
    gap: 4px;
    width: auto;
    margin-right: 15px;
}

.views .on {
    background: #d2d0ce;
}

.zoom {
    display: flex;
    align-items: center;
    gap: 8px;
    margin-left: -19px;
}

.zoom input {
    width: 148px;
    height: 18px;
    margin: 0;
    background: linear-gradient(#444, #444) center / 100% 2px no-repeat;
    appearance: none;
}

.zoom input::-webkit-slider-thumb {
    width: 8px;
    height: 18px;
    background: #444;
    appearance: none;
}

.zoom span {
    margin-left: 12px;
}

/* Taskbar */
.taskbar {
    display: flex;
    position: relative;
    flex: none;
    height: 60px;
    background: #020409;
    color: #fff;
}

.taskbar > button {
    width: 75px;
}

.taskbar .start,
.taskbar .task-view {
    width: 72px;
}

.taskbar .task-view {
    margin-right: 3px;
}

.taskbar .running {
    border-top: 3px solid #35363b;
    border-bottom: 3px solid #76b9ed;
    background: #35363b;
}

.tray {
    display: flex;
    align-items: center;
    margin-left: auto;
}

.tray button {
    width: 36px;
    height: 60px;
}

.tray .pen {
    width: 46px;
}

.line {
    fill: none;
    stroke: #fff;
    stroke-width: 1.5;
}

.ime {
    width: 34px;
    font-size: 22px;
    text-align: center;
}

.clock {
    width: 114px;
    line-height: 28px;
    text-align: center;
}

.tray .notice {
    position: relative;
    width: 60px;
    padding: 0 0 4px 4px;
}

.badge {
    position: absolute;
    right: 3px;
    bottom: 4px;
    width: 30px;
    height: 30px;
    border: 1px solid #888;
    border-radius: 50%;
    background: rgba(50, 50, 50, 0.9);
    font-weight: 600;
    line-height: 28px;
}

.desktop-edge {
    width: 1px;
    height: 60px;
    margin: 0 7px 0 13px;
    background: #777;
}

.credit {
    position: absolute;
    right: 16px;
    bottom: 8px;
    color: rgba(255, 255, 255, 0.6);
    font-size: 14px;
}
```
